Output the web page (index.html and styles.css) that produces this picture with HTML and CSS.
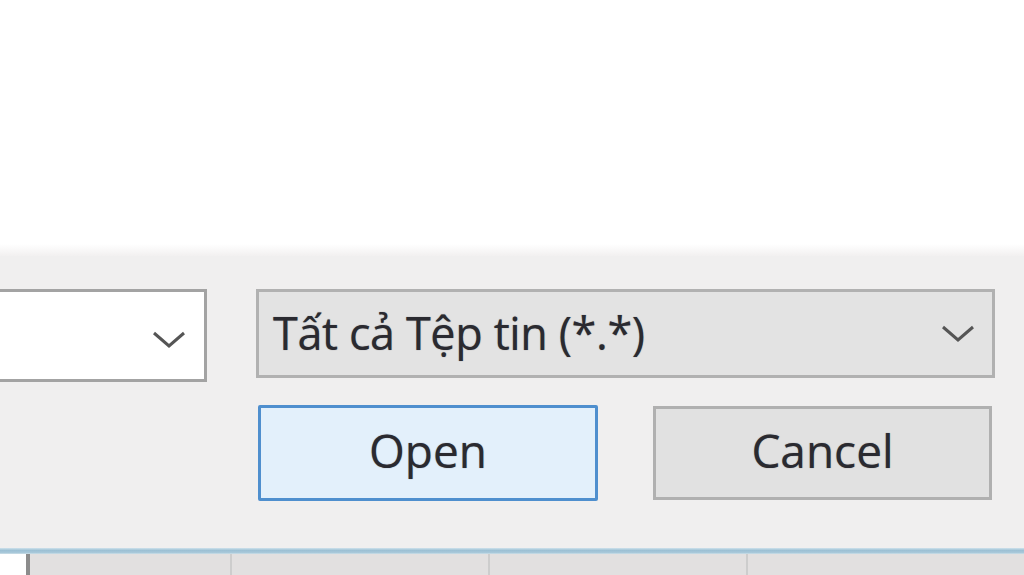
FILE: index.html
```html
<!DOCTYPE html>
<html>
<head>
<meta charset="utf-8">
<link rel="stylesheet" href="styles.css">
</head>
<body>
<div class="screen">
  <div class="top"></div>
  <div class="panel">
    <div class="row row1">
      <div class="combo name-combo">
        <svg class="chev" width="34" height="18" viewBox="0 0 34 18"><path d="M2 2 L17 15 L32 2" fill="none" stroke="#555" stroke-width="3"/></svg>
      </div>
      <div class="combo filter-combo">
        <span class="filter-text">Tất cả Tệp tin (*.*)</span>
        <svg class="chev" width="34" height="18" viewBox="0 0 34 18"><path d="M2 2 L17 15 L32 2" fill="none" stroke="#555" stroke-width="3"/></svg>
      </div>
    </div>
    <div class="row row2">
      <button class="btn btn-open">Open</button>
      <button class="btn btn-cancel">Cancel</button>
    </div>
  </div>
  <div class="sep"></div>
  <div class="bar">
    <div class="cell c0"></div>
    <div class="cell c1"></div>
    <div class="cell c2"></div>
    <div class="cell c3"></div>
    <div class="cell c4"></div>
  </div>
</div>
</body>
</html>
```
FILE: styles.css
```css
html, body {
  margin: 0;
  padding: 0;
  background: #fff;
}
.screen {
  width: 1024px;
  height: 575px;
  display: flex;
  flex-direction: column;
  overflow: hidden;
  font-family: "Open Sans", "Noto Sans", sans-serif;
}
.top {
  height: 256px;
  background: linear-gradient(#fff 0, #fff 244px, #f2f0f0 256px);
  flex: none;
}
.panel {
  height: 292px;
  flex: none;
  background: #f0efef;
  padding-top: 33px;
  box-sizing: border-box;
  display: flex;
  flex-direction: column;
}
.row {
  display: flex;
}
.row1 {
  align-items: flex-start;
}
.combo {
  box-sizing: border-box;
  border: 3px solid #a3a3a3;
  display: flex;
  align-items: center;
  position: relative;
}
.name-combo {
  width: 207px;
  height: 93px;
  background: #fff;
  justify-content: flex-end;
  padding-right: 18px;
  border-left: none;
}
.name-combo .chev {
  margin-top: 8px;
}
.filter-combo {
  margin-left: 49px;
  width: 739px;
  height: 89px;
  background: #e3e3e3;
  justify-content: space-between;
  padding-left: 14px;
  padding-right: 17px;
  border-color: #b1b1b1;
}
.filter-text {
  font-size: 45px;
  font-weight: 500;
  color: #2a2a30;
  letter-spacing: -0.4px;
  margin-top: -2px;
  text-shadow: 0 0 1px rgba(40, 40, 50, 0.6);
}
.row2 {
  margin-top: 23px;
  padding-left: 258px;
  align-items: flex-start;
}
.btn {
  box-sizing: border-box;
  font-family: "Open Sans", "Noto Sans", sans-serif;
  font-size: 46px;
  font-weight: 500;
  color: #2a2a30;
  text-shadow: 0 0 1px rgba(40, 40, 50, 0.6);
  padding: 0 0 6px 0;
  margin: 0;
  display: flex;
  align-items: center;
  justify-content: center;
}
.btn-open {
  width: 340px;
  height: 96px;
  background: #e3f0fb;
  border: 3px solid #4f8fce;
  border-radius: 2px;
}
.btn-cancel {
  margin-left: 55px;
  margin-top: 1px;
  width: 339px;
  height: 94px;
  background: #e1e1e1;
  border: 3px solid #b0b0b0;
}
.sep {
  height: 6px;
  flex: none;
  background: linear-gradient(#cfe2ec, #9cc0d4 40%, #a9c9da 80%, #d2e2ea);
}
.bar {
  flex: 1;
  display: flex;
  background: #e2e0e0;
}
.cell {
  height: 100%;
  box-sizing: border-box;
}
.c0 {
  width: 26px;
  background: #fff;
}
.c1 {
  width: 204px;
  border-left: 4px solid #8c8c8c;
}
.c2 {
  width: 258px;
  border-left: 2px solid #cdcdcd;
}
.c3 {
  width: 258px;
  border-left: 2px solid #cdcdcd;
}
.c4 {
  flex: 1;
  border-left: 2px solid #cdcdcd;
}
```
